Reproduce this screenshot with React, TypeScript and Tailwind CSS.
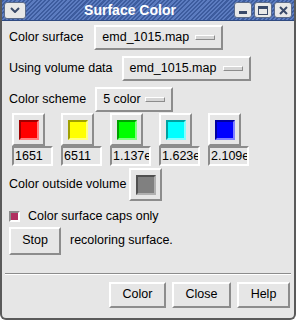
import React from 'react';

const raised = 'border-2 border-t-white border-l-white border-b-[#8c8c8c] border-r-[#8c8c8c]';

const MenuButton: React.FC<{ label: string; width: string }> = ({ label, width }) => (
  <div className={`${raised} ${width} h-[25px] bg-[#e6e6e6] flex items-center justify-between pl-[6px] pr-[6px]`}>
    <span>{label}</span>
    <span className="w-[20px] h-[5px] border border-t-white border-l-white border-b-[#8c8c8c] border-r-[#8c8c8c] bg-[#d6d6d6]" />
  </div>
);

const ColorWell: React.FC<{ fill: string; dark: string; light: string }> = ({ fill, dark, light }) => (
  <div className={`${raised} w-[33px] h-[33px] flex items-center justify-center bg-[#e6e6e6]`}>
    <div
      className="w-[20px] h-[20px] border-2"
      style={{ background: fill, borderTopColor: dark, borderLeftColor: dark, borderBottomColor: light, borderRightColor: light }}
    />
  </div>
);

const ValueEntry: React.FC<{ value: string }> = ({ value }) => (
  <div className="w-[41px] h-[20px] border-2 border-t-[#8c8c8c] border-l-[#8c8c8c] border-b-white border-r-white bg-[#e6e6e6] overflow-hidden flex items-center pl-[1px] whitespace-nowrap">
    {value}
  </div>
);

const TitleButton: React.FC<{ children: React.ReactNode }> = ({ children }) => (
  <div className="w-[18px] h-[16px] rounded-[3px] border border-[#5b6b8a] bg-[#e8e8e8] flex items-center justify-center">
    {children}
  </div>
);

const wells = [
  { fill: '#ff0000', dark: '#a00000', light: '#ff8080', value: '1651' },
  { fill: '#ffff00', dark: '#a0a000', light: '#ffff80', value: '6511' },
  { fill: '#00ff00', dark: '#00a000', light: '#80ff80', value: '1.137e' },
  { fill: '#00ffff', dark: '#00a0a0', light: '#80ffff', value: '1.623e' },
  { fill: '#0000ff', dark: '#0000a0', light: '#8080ff', value: '2.109e' },
];

const App: React.FC = () => {
  return (
    <div className="w-[296px] h-[321px] bg-white">
      <div
        className="w-[296px] h-[320px] bg-[#e6e6e6] border-x-2 border-b-2 border-[#5a5a5a] rounded-b-[6px] flex flex-col text-[12.5px] text-black overflow-hidden"
        style={{ fontFamily: '"Liberation Sans", Arial, sans-serif' }}
      >
        {/* Title bar */}
        <div className="h-[21px] flex items-center px-[2px] gap-[2px] bg-[repeating-linear-gradient(135deg,#5c7cc0_0px,#5c7cc0_1.5px,#3d5c9e_1.5px,#3d5c9e_3px)] border-b border-[#2f4a80] -mx-[2px]">
          <div className="ml-[2px] w-[22px] h-[17px] rounded-[3px] border border-[#5b6b8a] bg-[#e8e8e8] flex items-center justify-center">
            <svg width="10" height="6" viewBox="0 0 10 6"><path d="M1 1 L5 5 L9 1" stroke="#3a4a6a" strokeWidth="2" fill="none" /></svg>
          </div>
          <div className="flex-1 text-center text-white font-bold text-[14px]">Surface Color</div>
          <div className="flex gap-[2px] mr-[2px]">
            <TitleButton>
              <div className="w-[8px] h-[3px] bg-[#3a4a6a] mt-[5px]" />
            </TitleButton>
            <TitleButton>
              <div className="w-[10px] h-[9px] border border-[#3a4a6a] border-t-[3px]" />
            </TitleButton>
            <TitleButton>
              <svg width="9" height="9" viewBox="0 0 9 9"><path d="M1 1 L8 8 M8 1 L1 8" stroke="#3a4a6a" strokeWidth="2" /></svg>
            </TitleButton>
          </div>
        </div>

        <div className="flex flex-col pl-[7px] pr-[3px]">
          <div className="flex items-center mt-[4px] gap-[11px]">
            <span>Color surface</span>
            <MenuButton label="emd_1015.map" width="w-[129px]" />
          </div>
          <div className="flex items-center mt-[6px] gap-[9px]">
            <span>Using volume data</span>
            <MenuButton label="emd_1015.map" width="w-[129px]" />
          </div>
          <div className="flex items-center mt-[6px] gap-[9px]">
            <span>Color scheme</span>
            <MenuButton label="5 color" width="w-[78px]" />
          </div>

          <div className="flex mt-[1px] gap-[8px] pl-[3px]">
            {wells.map((w) => (
              <div key={w.value} className="flex flex-col items-start w-[41px]">
                <ColorWell fill={w.fill} dark={w.dark} light={w.light} />
                <ValueEntry value={w.value} />
              </div>
            ))}
          </div>

          <div className="flex items-center mt-[2px] gap-[3px]">
            <span>Color outside volume</span>
            <ColorWell fill="#808080" dark="#505050" light="#b0b0b0" />
          </div>

          <div className="flex items-center mt-[6px] gap-[8px]">
            <div className="w-[11px] h-[11px] border-2 border-t-[#8c8c8c] border-l-[#8c8c8c] border-b-white border-r-white bg-[#b03060]" />
            <span>Color surface caps only</span>
          </div>

          <div className="flex items-center mt-[1px] gap-[9px]">
            <div className={`${raised} w-[52px] h-[28px] flex items-center justify-center`}>Stop</div>
            <span>recoloring surface.</span>
          </div>
        </div>

        <div className="mt-[18px] mx-[3px] h-[2px] border-t border-[#8c8c8c] border-b border-b-white" />

        <div className="flex justify-end gap-[6px] mt-[7px] pr-[4px]">
          <div className={`${raised} w-[57px] h-[26px] flex items-center justify-center`}>Color</div>
          <div className={`${raised} w-[59px] h-[26px] flex items-center justify-center`}>Close</div>
          <div className={`${raised} w-[53px] h-[26px] flex items-center justify-center`}>Help</div>
        </div>
      </div>
    </div>
  );
};

export default App;
